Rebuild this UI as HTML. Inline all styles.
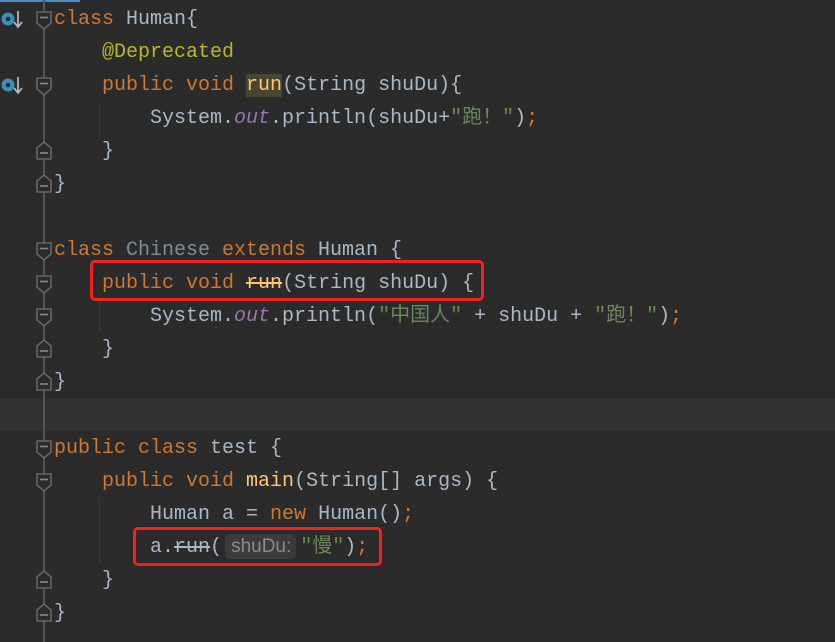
<!DOCTYPE html>
<html><head><meta charset="utf-8"><style>
body{margin:0;width:835px;height:642px;background:#2b2b2b;overflow:hidden;position:relative;font-family:"Liberation Mono","Noto Sans CJK SC",monospace;font-size:20px;color:#a9b7c6}
.l{position:absolute;left:54px;height:33px;line-height:34px;white-space:pre}
.k{color:#cc7832}.s{color:#6a8759}.a{color:#bbb529}.f{color:#9876aa;font-style:italic}.m{color:#ffc66d}
.st{text-decoration:line-through}
.box{position:absolute;border:3px solid #f5221b;border-radius:5px}
.hint{display:inline-block;background:#3b3b3b;color:#8a8a8a;font-family:"Liberation Sans",sans-serif;font-size:19px;line-height:25px;padding:0 5px 0 6px;border-radius:5px;margin:0 4px 0 3px}
.ig{position:absolute;width:1px;background:#3a3a3a}
</style></head><body>
<div style="position:absolute;left:0;top:0;width:80px;height:2px;background:#4a88c7"></div>
<div style="position:absolute;left:0;top:399px;width:835px;height:32px;background:#323232"></div>
<div style="position:absolute;left:43px;top:0;width:2px;height:642px;background:#555"></div>
<div class="ig" style="left:99px;top:102px;height:33px"></div>
<div class="ig" style="left:99px;top:300px;height:33px"></div>
<div class="ig" style="left:99px;top:498px;height:66px"></div>
<svg width="60" height="642" style="position:absolute;left:0;top:0">
<defs>
<g id="od"><path d="M-7,-7 H7 V4 L0,10 L-7,4 Z" fill="#2b2b2b" stroke="#666" stroke-width="1.6"/><path d="M-4,-1.5 H4" stroke="#888" stroke-width="1.6"/></g>
<g id="cu"><path d="M-7,-3 L0,-9 L7,-3 V8 H-7 Z" fill="#2b2b2b" stroke="#666" stroke-width="1.6"/><path d="M-4,2 H4" stroke="#888" stroke-width="1.6"/></g>
<g id="ov"><circle cx="8" cy="0" r="6.5" fill="#3d8fb8"/><circle cx="8" cy="0" r="2.3" fill="#2b2b2b"/><path d="M18,-8 V7 M14,3 L18,8 L22,3" stroke="#bbb" stroke-width="1.7" fill="none"/></g>
</defs>
<use href="#ov" x="0" y="19"/><use href="#ov" x="0" y="85"/>
<use href="#od" x="44" y="19"/><use href="#od" x="44" y="85"/>
<use href="#cu" x="44" y="151"/><use href="#cu" x="44" y="184"/>
<use href="#od" x="44" y="250"/><use href="#od" x="44" y="283"/><use href="#od" x="44" y="316"/>
<use href="#cu" x="44" y="349"/><use href="#cu" x="44" y="382"/>
<use href="#od" x="44" y="448"/><use href="#od" x="44" y="481"/>
<use href="#cu" x="44" y="580"/><use href="#cu" x="44" y="613"/>
</svg>
<div class="l" style="top:3px"><span class="k">class </span>Human{</div>
<div class="l" style="top:36px">    <span class="a">@Deprecated</span></div>
<div class="l" style="top:69px">    <span class="k">public void </span><span class="m" style="background:#4a4530">run</span>(String shuDu){</div>
<div class="l" style="top:102px">        System.<span class="f">out</span>.println(shuDu+<span class="s">"跑！"</span>)<span class="k">;</span></div>
<div class="l" style="top:135px">    }</div>
<div class="l" style="top:168px">}</div>
<div class="l" style="top:234px"><span class="k">class </span><span style="color:#808a94">Chinese </span><span class="k">extends </span>Human {</div>
<div class="l" style="top:267px">    <span class="k">public void </span><span class="m st">run</span>(String shuDu) {</div>
<div class="l" style="top:300px">        System.<span class="f">out</span>.println(<span class="s">"中国人"</span> + shuDu + <span class="s">"跑！"</span>)<span class="k">;</span></div>
<div class="l" style="top:333px">    }</div>
<div class="l" style="top:366px">}</div>
<div class="l" style="top:432px"><span class="k">public class </span>test {</div>
<div class="l" style="top:465px">    <span class="k">public void </span><span class="m">main</span>(String[] args) {</div>
<div class="l" style="top:498px">        Human a = <span class="k">new </span>Human()<span class="k">;</span></div>
<div class="l" style="top:531px">        a.<span class="st">run</span>(<span class="hint">shuDu:</span><span class="s">"慢"</span>)<span class="k">;</span></div>
<div class="l" style="top:564px">    }</div>
<div class="l" style="top:597px">}</div>
<div class="box" style="left:90px;top:260px;width:388px;height:35px"></div>
<div class="box" style="left:133px;top:527px;width:243px;height:33px"></div>
</body></html>
